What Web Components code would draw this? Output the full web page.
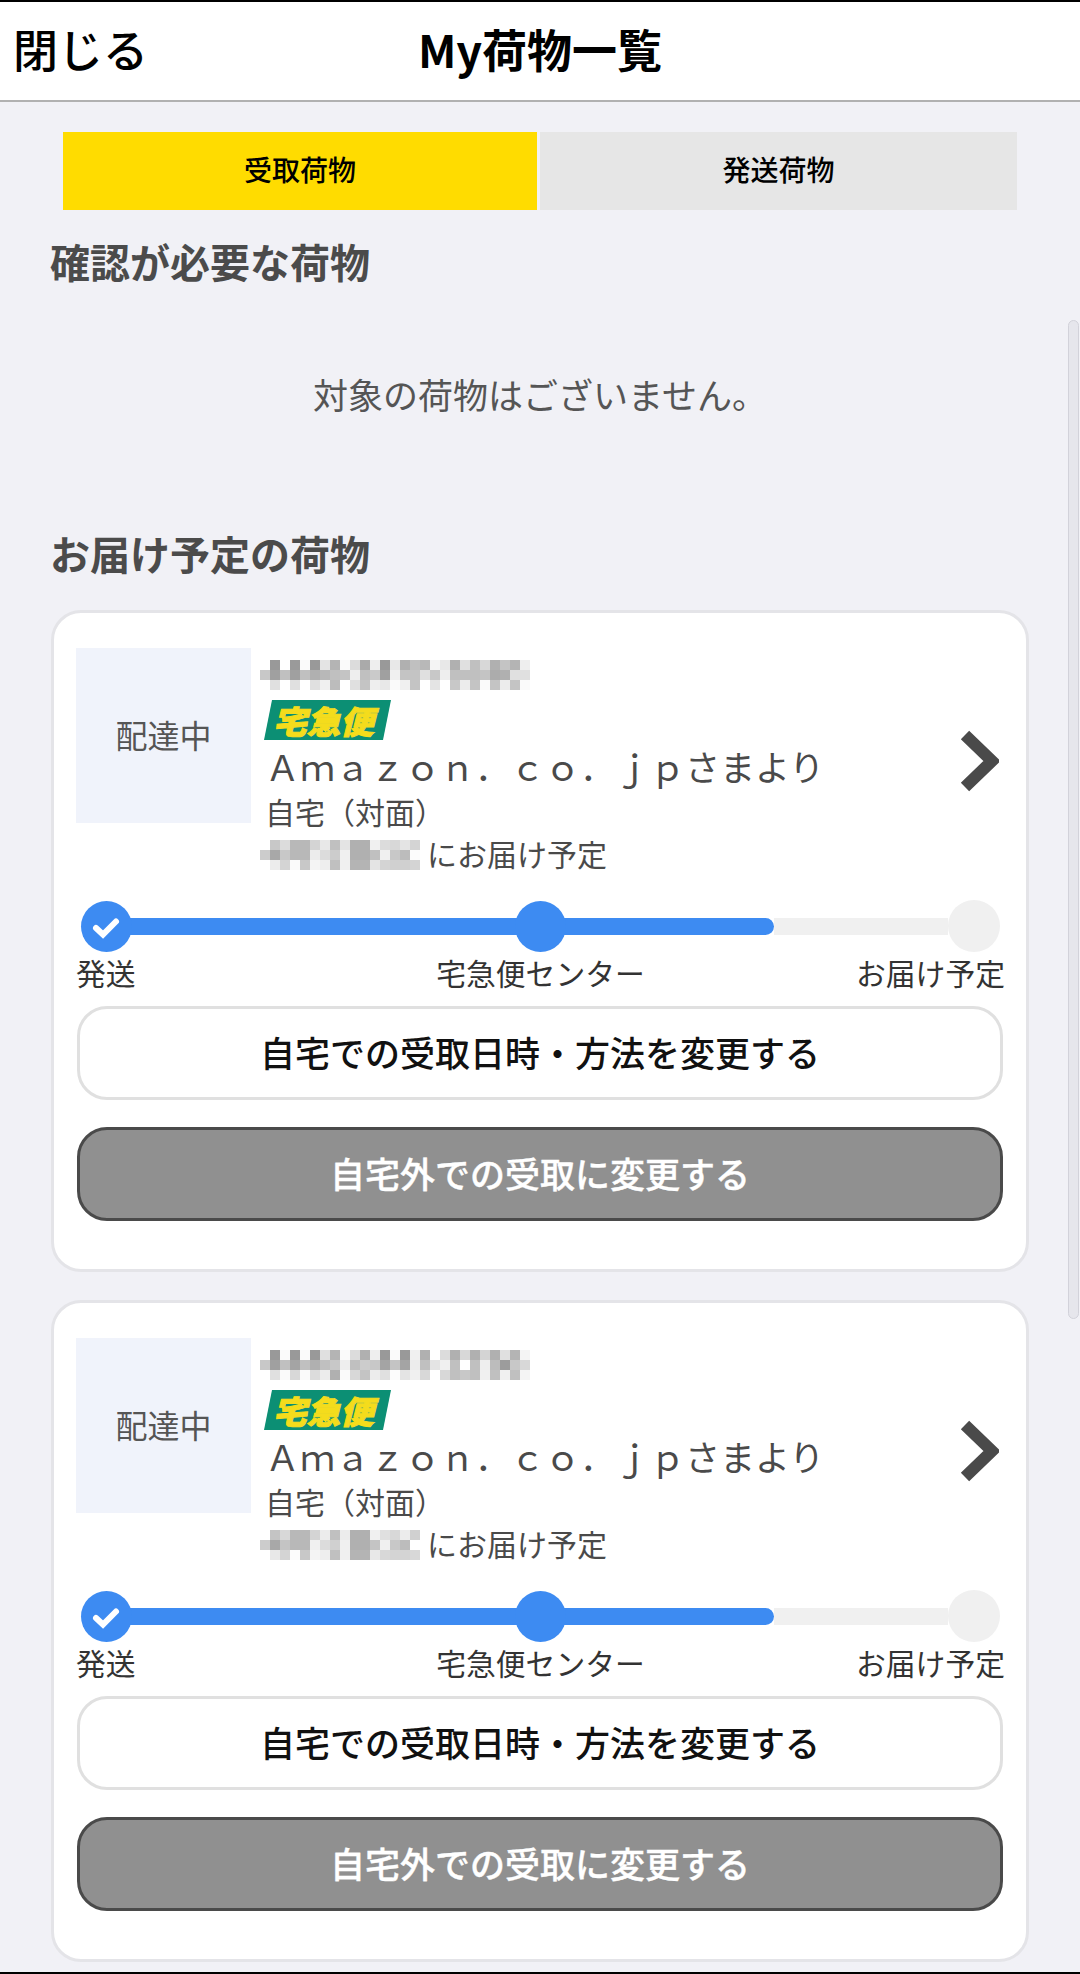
<!DOCTYPE html>
<html lang="ja">
<head>
<meta charset="utf-8">
<title>My荷物一覧</title>
<style>
html, body { margin: 0; padding: 0; }
body {
	width: 1080px;
	height: 1974px;
	overflow: hidden;
	background: #f1f1f6;
	font-family: "Noto Sans CJK JP", "Noto Sans", sans-serif;
}
</style>
</head>
<body>
<my-parcels>
	<parcel-card>
		<pixel-blur slot="tracking" cols="27" data="ff 99 ff 9a fa 99 e4 b4 fa dc aa ee 99 e8 b0 c0 b8 f4 e8 b0 e0 c0 d8 b0 c4 b4 ee|c8 a0 c0 a0 c0 b0 b8 c0 c4 ee c0 ca a0 f0 c4 c4 e0 c8 ee c0 c0 c0 c4 ac b0 e0 e0|ff e0 ff e0 ff e0 f0 bc ff e0 c4 ee e8 fa f0 c4 ff e4 ff c8 ec c4 fa c4 ec c4 fa"></pixel-blur>
		<pixel-blur slot="date" cols="16" data="ff c8 dc b8 b8 d4 e8 c0 e4 b0 b0 f0 dc d8 e4 d4|cc a8 c8 b8 b8 ec dc cc f0 b0 b0 c0 f0 c8 bc fc|ff ec d4 fa c8 f4 ee c0 f0 b4 b4 e4 d4 d0 d0 d4"></pixel-blur>
	</parcel-card>
	<parcel-card>
		<pixel-blur slot="tracking" cols="27" data="ff 99 fa 99 fa 99 e0 b4 fa dc b0 ee 99 fa 99 f0 b0 ff dc b0 d8 b0 d4 b0 e0 b4 f4|c8 a0 c0 a4 c0 b0 c0 c8 ee c0 cc c8 a4 c4 a4 ec c0 e4 f0 c0 ff c0 ee bc 9c c8 d8|ff e0 fa d8 fa dc ec b0 fa d8 c4 ec e0 fc e4 f0 d8 ff d8 c0 c8 c0 f0 c0 f0 c0 f4"></pixel-blur>
		<pixel-blur slot="date" cols="16" data="ff c4 d8 b8 b8 d4 ec c0 ec b0 b0 f0 e0 d8 ec d0|cc a8 c4 b8 b8 f0 dc d0 f0 b0 b0 c4 f0 c8 bc ff|ff e8 d4 fc c8 f4 ee c0 f0 b4 b4 e8 d8 d4 d4 d8"></pixel-blur>
	</parcel-card>
</my-parcels>

<script>
customElements.define('pixel-blur', class extends HTMLElement {
	constructor() {
		super();
		this.attachShadow({ mode: 'open' });
	}
	connectedCallback() {
		const cols = this.getAttribute('cols');
		const cells = this.getAttribute('data').split('|').join(' ').split(' ')
			.map(v => `<i style="background:#${v}${v}${v}"></i>`).join('');
		this.shadowRoot.innerHTML = `
			<style>
			:host { display: grid; grid-template-columns: repeat(${cols}, 10px); grid-auto-rows: 10px; }
			i { display: block; }
			</style>${cells}`;
	}
});

customElements.define('app-header', class extends HTMLElement {
	constructor() {
		super();
		this.attachShadow({ mode: 'open' });
		this.shadowRoot.innerHTML = `
			<style>
			:host {
				display: grid;
				grid-template-columns: 1fr auto 1fr;
				align-items: start;
				height: 98px;
				background: #fff;
				border-top: 2px solid #000;
				border-bottom: 2px solid #b1b1b1;
				color: #000;
				padding: 0 13px;
			}
			.close { font-size: 45px; font-weight: 500; line-height: 94px; }
			.title { font-size: 45px; font-weight: 700; line-height: 94px; }
			</style>
			<span class="close">閉じる</span>
			<span class="title"><slot></slot></span>
			<span></span>
		`;
	}
});

customElements.define('tab-bar', class extends HTMLElement {
	constructor() {
		super();
		this.attachShadow({ mode: 'open' });
		this.shadowRoot.innerHTML = `
			<style>
			:host {
				display: grid;
				grid-template-columns: 474px 477px;
				column-gap: 3px;
				margin: 30px 0 0 63px;
				height: 78px;
				font-size: 28px;
				font-weight: 500;
				color: #000;
			}
			div { display: flex; align-items: center; justify-content: center; padding-bottom: 4px; box-sizing: border-box; }
			.on { background: #ffdc00; }
			.off { background: #e6e6e6; }
			</style>
			<div class="on">受取荷物</div>
			<div class="off">発送荷物</div>
		`;
	}
});

customElements.define('section-heading', class extends HTMLElement {
	constructor() {
		super();
		this.attachShadow({ mode: 'open' });
		this.shadowRoot.innerHTML = `
			<style>
			:host {
				display: block;
				padding-left: 50px;
				font-size: 40px;
				font-weight: 700;
				line-height: 60px;
				color: #4b4b4b;
			}
			</style>
			<slot></slot>
		`;
	}
});

customElements.define('empty-note', class extends HTMLElement {
	constructor() {
		super();
		this.attachShadow({ mode: 'open' });
		this.shadowRoot.innerHTML = `
			<style>
			:host {
				display: flex;
				align-items: center;
				justify-content: center;
				height: 204px;
				font-size: 35px;
				color: #555;
			}
			</style>
			<slot></slot>
		`;
	}
});

customElements.define('sagawa-badge', class extends HTMLElement {
	constructor() {
		super();
		this.attachShadow({ mode: 'open' });
		this.shadowRoot.innerHTML = `
			<style>
			:host {
				display: flex;
				align-items: center;
				justify-content: center;
				width: 127px;
				height: 40px;
				margin-left: 4px;
				background: #0c8f74;
				clip-path: polygon(8px 0, 100% 0, 119px 100%, 0 100%);
			}
			span {
				display: block;
				font-size: 32px;
				font-weight: 900;
				line-height: 40px;
				color: #f4dc1c;
				-webkit-text-stroke: 1px #f4dc1c;
				transform: skewX(-14deg) scaleX(1.05);
			}
			</style>
			<span>宅急便</span>
		`;
	}
});

customElements.define('parcel-progress', class extends HTMLElement {
	constructor() {
		super();
		this.attachShadow({ mode: 'open' });
		this.shadowRoot.innerHTML = `
			<style>
			:host { display: block; margin-top: 25px; }
			.track { display: flex; align-items: center; height: 52px; margin: 0 3px 0 4px; }
			.dot { flex: none; width: 51px; height: 51px; border-radius: 50%; background: #3d8bf2; position: relative; z-index: 1; }
			.dot svg { display: block; }
			.dot.todo { width: 52px; height: 52px; background: #f0f0f0; }
			.bar { height: 17px; background: #3d8bf2; }
			.a { width: 391px; margin: 0 -4px; }
			.b { width: 212px; margin-left: -4px; border-radius: 0 9px 9px 0; }
			.c { flex: 1; background: #f0f0f0; }
			.labels {
				display: grid;
				grid-template-columns: 1fr auto 1fr;
				margin: 0 -2px 0 -1px;
				font-size: 29.8px;
				line-height: 40px;
				color: #333;
			}
			.labels span:last-child { text-align: right; }
			</style>
			<div class="track">
				<div class="dot"><svg width="51" height="51" viewBox="0 0 51 51"><path d="M15 27l7 6.5L35 20.5" fill="none" stroke="#fff" stroke-width="6" stroke-linecap="round" stroke-linejoin="miter"/></svg></div>
				<div class="bar a"></div>
				<div class="dot"></div>
				<div class="bar b"></div>
				<div class="bar c"></div>
				<div class="dot todo"></div>
			</div>
			<div class="labels"><span>発送</span><span>宅急便センター</span><span>お届け予定</span></div>
		`;
	}
});

customElements.define('parcel-button', class extends HTMLElement {
	constructor() {
		super();
		this.attachShadow({ mode: 'open' });
		this.shadowRoot.innerHTML = `
			<style>
			:host {
				display: flex;
				align-items: center;
				justify-content: center;
				box-sizing: border-box;
				height: 94px;
				padding-bottom: 3px;
				border: 3px solid #e0e0e0;
				border-radius: 30px;
				background: #fff;
				font-size: 35px;
				font-weight: 500;
				color: #111;
			}
			:host([dark]) {
				background: #909090;
				border-color: #4a4a4a;
				color: #fff;
				-webkit-text-stroke: 0.4px #fff;
			}
			</style>
			<slot></slot>
		`;
	}
});

customElements.define('parcel-card', class extends HTMLElement {
	constructor() {
		super();
		this.attachShadow({ mode: 'open' });
		this.shadowRoot.innerHTML = `
			<style>
			:host {
				display: block;
				box-sizing: border-box;
				width: 978px;
				height: 662px;
				margin-left: 51px;
				padding: 35px 23px 0;
				background: #fff;
				border: 3px solid #e4e4e8;
				border-radius: 30px;
			}
			.top { display: flex; height: 227px; }
			.status {
				flex: none;
				display: flex;
				align-items: center;
				justify-content: center;
				box-sizing: border-box;
				width: 175px;
				height: 175px;
				margin-left: -1px;
				padding-bottom: 4px;
				background: #f0f3fb;
				font-size: 32px;
				color: #555;
			}
			.info { flex: 1; min-width: 0; margin-left: 9px; padding-top: 12px; color: #4a4a4a; }
			.info sagawa-badge { margin-top: 10px; }
			.sender { font-size: 35px; line-height: 52px; height: 52px; margin-left: 5px; white-space: nowrap; color: #4a4a4a; }
			.place { font-size: 30px; line-height: 40px; margin: -1px 0 0 5px; }
			.date { display: flex; align-items: center; height: 30px; margin-top: 9px; font-size: 30px; color: #4a4a4a; }
			.date span { margin: 0 0 4px 7px; white-space: nowrap; }
			.chev { flex: none; margin: 82px 4px 0 0; align-self: flex-start; }
			.chev svg { display: block; }
			parcel-button { margin-top: 27px; }
			parcel-progress + parcel-button { margin-top: 14px; }
			</style>
			<div class="top">
				<div class="status">配達中</div>
				<div class="info">
					<slot name="tracking"></slot>
					<sagawa-badge></sagawa-badge>
					<div class="sender">Ａｍａｚｏｎ．ｃｏ．ｊｐさまより</div>
					<div class="place">自宅（対面）</div>
					<div class="date"><slot name="date"></slot><span>にお届け予定</span></div>
				</div>
				<div class="chev"><svg width="39" height="62" viewBox="0 0 39 62"><path d="M5 5L32 31L5 57" fill="none" stroke="#4a4a4a" stroke-width="12"/></svg></div>
			</div>
			<parcel-progress></parcel-progress>
			<parcel-button>自宅での受取日時・方法を変更する</parcel-button>
			<parcel-button dark>自宅外での受取に変更する</parcel-button>
		`;
	}
});

customElements.define('my-parcels', class extends HTMLElement {
	constructor() {
		super();
		this.attachShadow({ mode: 'open' });
		this.shadowRoot.innerHTML = `
			<style>
			:host { display: block; position: relative; height: 1974px; background: #f1f1f6; }
			.first { margin-top: 21px; }
			.second { margin-top: 28px; }
			.cards { display: grid; row-gap: 28px; margin-top: 27px; }
			.scroll {
				position: absolute;
				left: 1068px;
				top: 320px;
				width: 11px;
				height: 999px;
				box-sizing: border-box;
				border: 1px solid #d2d2da;
				border-radius: 6px;
				background: #e6e6ec;
			}
			.foot { position: absolute; left: 0; right: 0; bottom: 0; height: 2px; background: #000; }
			</style>
			<app-header>My荷物一覧</app-header>
			<tab-bar></tab-bar>
			<section-heading class="first">確認が必要な荷物</section-heading>
			<empty-note>対象の荷物はございません。</empty-note>
			<section-heading class="second">お届け予定の荷物</section-heading>
			<div class="cards"><slot></slot></div>
			<div class="scroll"></div>
			<div class="foot"></div>
		`;
	}
});
</script>
</body>
</html>
